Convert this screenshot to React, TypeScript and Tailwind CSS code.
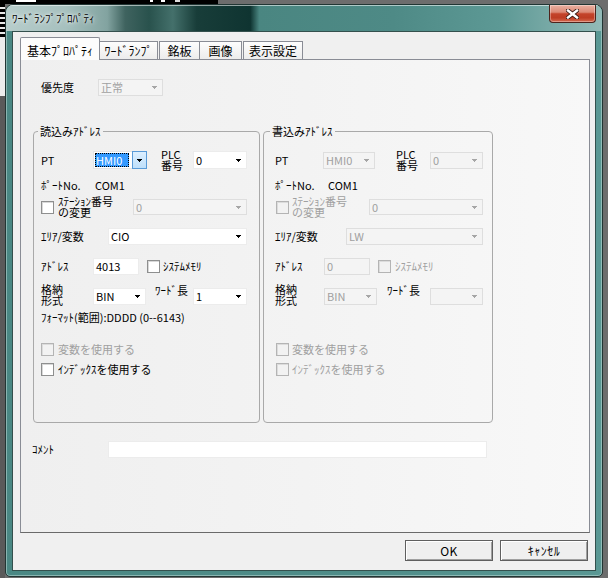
import React from "react";

function Arrow({ disabled }: { disabled?: boolean }) {
  const c = disabled ? "#a6a6a6" : "#000";
  return (
    <svg width="5" height="3" viewBox="0 0 5 3" shapeRendering="crispEdges" className="shrink-0">
      <rect x="0" y="0" width="5" height="1" fill={c} />
      <rect x="1" y="1" width="3" height="1" fill={c} />
      <rect x="2" y="2" width="1" height="1" fill={c} />
    </svg>
  );
}

function Combo({ cls, text = "", disabled }: { cls: string; text?: string; disabled?: boolean }) {
  return (
    <div
      className={`${cls} shrink-0 flex items-center justify-between border pl-[2px] pr-[5px] ${
        disabled ? "bg-[#f4f4f4] border-[#dedede] text-[#a0a0a0]" : "bg-white border-[#ececec] text-black"
      }`}
    >
      <span className="leading-[13px]">{text}</span>
      <Arrow disabled={disabled} />
    </div>
  );
}

function FocusCombo() {
  return (
    <div className="w-[54px] h-[18px] shrink-0 flex bg-white border border-[#e4e4e4]">
      <div className="flex-1 p-px">
        <div className="w-[34px] h-full bg-[#3399ff] text-white border border-dotted border-black flex items-center leading-[13px]">
          HMI0
        </div>
      </div>
      <div className="w-[15px] h-[18px] -mt-px -mr-px bg-[linear-gradient(180deg,#dcefff,#bfe0fb)] border border-[#5a9bd8] flex items-center justify-center">
        <Arrow />
      </div>
    </div>
  );
}

function Check({ disabled, cls = "" }: { disabled?: boolean; cls?: string }) {
  return (
    <span
      className={`${cls} inline-block w-[13px] h-[13px] shrink-0 border ${
        disabled
          ? "border-[#b4b4b4] bg-[#f2f2f2] shadow-[inset_1px_1px_0_#dcdcdc]"
          : "border-[#8e8f8f] bg-white shadow-[inset_1px_1px_0_#d8d8d8]"
      }`}
    />
  );
}

function LeftGroup() {
  return (
    <fieldset className="w-[227px] h-[298px] shrink-0 border border-[#a9a9a9] rounded-[4px] pl-[4px] m-0">
      <legend className="px-[2px] leading-[12px]">読込みｱﾄﾞﾚｽ</legend>
      <div className="pl-[3px] flex flex-col">
        <div className="mt-[13px] h-[20px] flex items-center">
          <span className="w-[52px]">PT</span>
          <FocusCombo />
          <div className="ml-[14px] w-[32px] h-[22px] shrink-0 leading-[11px]">
            PLC
            <br />
            番号
          </div>
          <Combo cls="w-[54px] h-[18px]" text="0" />
        </div>
        <div className="mt-[8px] h-[14px] flex items-center">
          <span className="w-[54px]">ﾎﾟｰﾄNo.</span>
          <span>COM1</span>
        </div>
        <div className="mt-[5px] h-[20px] flex items-center">
          <Check />
          <div className="ml-[4px] w-[75px] h-[22px] shrink-0 leading-[11px] whitespace-nowrap">
            ｽﾃｰｼｮﾝ番号
            <br />
            の変更
          </div>
          <Combo cls="w-[114px] h-[16px]" text="0" disabled />
        </div>
        <div className="mt-[11px] h-[17px] flex items-center">
          <span className="w-[67px]">ｴﾘｱ/変数</span>
          <Combo cls="w-[139px] h-[17px]" text="CIO" />
        </div>
        <div className="mt-[13px] h-[17px] flex items-center">
          <span className="w-[52px]">ｱﾄﾞﾚｽ</span>
          <div className="w-[46px] h-[17px] bg-white border border-[#ececec] pl-[2px] flex items-center">4013</div>
          <Check cls="ml-[8px]" />
          <span className="ml-[3px]">ｼｽﾃﾑﾒﾓﾘ</span>
        </div>
        <div className="mt-[10px] h-[20px] flex items-end">
          <div className="w-[52px] h-[22px] shrink-0 self-center leading-[11px]">
            格納
            <br />
            形式
          </div>
          <Combo cls="w-[53px] h-[17px]" text="BIN" />
          <div className="ml-[9px] w-[38px] self-start leading-[10px] whitespace-nowrap">ﾜｰﾄﾞ長</div>
          <Combo cls="w-[54px] h-[17px]" text="1" />
        </div>
        <div className="mt-[6px] h-[13px] leading-[13px] whitespace-nowrap">ﾌｫｰﾏｯﾄ(範囲):DDDD (0--6143)</div>
        <div className="mt-[19px] h-[13px] flex items-center">
          <Check disabled />
          <span className="ml-[4px] text-[#a0a0a0]">変数を使用する</span>
        </div>
        <div className="mt-[7px] h-[13px] flex items-center">
          <Check />
          <span className="ml-[4px]">ｲﾝﾃﾞｯｸｽを使用する</span>
        </div>
      </div>
    </fieldset>
  );
}

function RightGroup() {
  return (
    <fieldset className="w-[230px] h-[298px] shrink-0 border border-[#a9a9a9] rounded-[4px] pl-[6px] m-0">
      <legend className="px-[2px] leading-[12px]">書込みｱﾄﾞﾚｽ</legend>
      <div className="pl-[5px] flex flex-col">
        <div className="mt-[13px] h-[20px] flex items-center">
          <span className="w-[48px]">PT</span>
          <Combo cls="w-[52px] h-[17px]" text="HMI0" disabled />
          <div className="ml-[21px] w-[34px] h-[22px] shrink-0 leading-[11px]">
            PLC
            <br />
            番号
          </div>
          <Combo cls="w-[53px] h-[17px]" text="0" disabled />
        </div>
        <div className="mt-[8px] h-[14px] flex items-center">
          <span className="w-[53px]">ﾎﾟｰﾄNo.</span>
          <span>COM1</span>
        </div>
        <div className="mt-[5px] h-[20px] flex items-center">
          <Check disabled cls="ml-px" />
          <div className="ml-[3px] w-[77px] h-[22px] shrink-0 leading-[11px] text-[#a0a0a0] whitespace-nowrap">
            ｽﾃｰｼｮﾝ番号
            <br />
            の変更
          </div>
          <Combo cls="w-[114px] h-[16px]" text="0" disabled />
        </div>
        <div className="mt-[11px] h-[17px] flex items-center">
          <span className="w-[71px]">ｴﾘｱ/変数</span>
          <Combo cls="w-[137px] h-[17px]" text="LW" disabled />
        </div>
        <div className="mt-[13px] h-[17px] flex items-center">
          <span className="w-[49px]">ｱﾄﾞﾚｽ</span>
          <div className="w-[46px] h-[17px] bg-[#f4f4f4] border border-[#dedede] text-[#a0a0a0] pl-[2px] flex items-center">
            0
          </div>
          <Check disabled cls="ml-[8px]" />
          <span className="ml-[4px] text-[#a0a0a0]">ｼｽﾃﾑﾒﾓﾘ</span>
        </div>
        <div className="mt-[10px] h-[20px] flex items-end">
          <div className="w-[49px] h-[22px] shrink-0 self-center leading-[11px]">
            格納
            <br />
            形式
          </div>
          <Combo cls="w-[53px] h-[17px]" text="BIN" disabled />
          <div className="ml-[10px] w-[43px] self-start leading-[10px] whitespace-nowrap">ﾜｰﾄﾞ長</div>
          <Combo cls="w-[53px] h-[17px]" text="" disabled />
        </div>
        <div className="mt-[38px] h-[13px] flex items-center">
          <Check disabled cls="ml-px" />
          <span className="ml-[3px] text-[#a0a0a0]">変数を使用する</span>
        </div>
        <div className="mt-[7px] h-[13px] flex items-center">
          <Check disabled cls="ml-px" />
          <span className="ml-[3px] text-[#a0a0a0]">ｲﾝﾃﾞｯｸｽを使用する</span>
        </div>
      </div>
    </fieldset>
  );
}

function Tab({ label, cls }: { label: string; cls: string }) {
  return (
    <div
      className={`${cls} h-[18px] shrink-0 border-t border-r border-[#898c95] bg-[linear-gradient(180deg,#fdfdfd,#ececec)] flex items-center justify-center text-[12px] leading-[14px] whitespace-nowrap`}
    >
      {label}
    </div>
  );
}

function Button({ label }: { label: string }) {
  return (
    <div className="w-[88px] h-[21px] border border-[#5f5f5f] bg-[#efefef] shadow-[inset_1px_1px_0_#ffffff,inset_-1px_-1px_0_#a0a0a0] flex items-center justify-center text-[12px] leading-[14px] tracking-[0.5px]">
      {label}
    </div>
  );
}

function Window() {
  return (
    <div className="w-[598px] h-[573px] shrink-0 flex flex-col rounded-t-[8px] rounded-b-[5px] border border-[#223634] bg-[linear-gradient(90deg,#4a8884,#4f8d89_60%,#5a9894)] overflow-hidden shadow-[inset_0_0_0_1px_rgba(200,225,222,0.5)]">
      <div className="h-[26px] shrink-0 flex items-start justify-between bg-[linear-gradient(90deg,#b7cdcb_0%,#a6c0be_10%,#82a3a0_17%,#3f635f_20%,#29524d_24%,#44706b_28%,#183d39_32%,#0f3431_41%,#4a8681_42.5%,#4e8a86_65%,#5d9995_83%,#93bab7_100%)] shadow-[inset_0_1px_0_rgba(255,255,255,0.55)]">
        <div className="pl-[6px] pt-[7px] text-[11px] leading-[13px] whitespace-nowrap [text-shadow:0_0_6px_#ffffff,0_0_3px_#ffffff]">
          ﾜｰﾄﾞﾗﾝﾌﾟﾌﾟﾛﾊﾟﾃｨ
        </div>
        <div className="mr-[6px] w-[47px] h-[18px] rounded-b-[4px] border border-t-0 border-[#4e231c] bg-[linear-gradient(180deg,#eab0a2_0%,#dc8a76_42%,#c4442b_52%,#bd3d24_75%,#d56a50_100%)] shadow-[inset_0_0_0_1px_rgba(255,255,255,0.35)] flex items-center justify-center">
          <svg width="13" height="10" viewBox="0 0 13 10">
            <path d="M2 1.5 L11 8.5 M11 1.5 L2 8.5" stroke="#3a1a14" strokeWidth="4.2" strokeLinecap="square" />
            <path d="M2 1.5 L11 8.5 M11 1.5 L2 8.5" stroke="#ffffff" strokeWidth="2.4" strokeLinecap="square" />
          </svg>
        </div>
      </div>
      <div className="mx-[6px] h-[540px] shrink-0 border border-[#34504d] bg-[#f0f0f0] flex flex-col text-[11px] leading-[13px] text-black">
        <div className="h-[27px] pt-[5px] pl-[7px] flex items-end relative z-10 shrink-0">
          <div className="relative top-px w-[80px] h-[23px] shrink-0 bg-[#fcfcfc] border border-b-0 border-[#898c95] rounded-t-[2px] flex items-center justify-center pt-[3px] text-[12px] leading-[14px] whitespace-nowrap">
            基本ﾌﾟﾛﾊﾟﾃｨ
          </div>
          <Tab label="ﾜｰﾄﾞﾗﾝﾌﾟ" cls="w-[58px]" />
          <Tab label="銘板" cls="ml-px w-[41px] border-l" />
          <Tab label="画像" cls="w-[42px]" />
          <Tab label="表示設定" cls="ml-px w-[60px] border-l" />
        </div>
        <div className="ml-[7px] w-[570px] h-[474px] shrink-0 border border-[#898c95] border-b-[#6a6a6a] bg-[linear-gradient(90deg,#efefef,#f3f3f3_50%,#f8f8f8)] flex flex-col">
          <div className="mt-[19px] ml-[20px] h-[17px] flex items-center">
            <span className="w-[57px]">優先度</span>
            <Combo cls="w-[65px] h-[17px]" text="正常" disabled />
          </div>
          <div className="mt-[29px] ml-[12px] flex gap-[3px]">
            <LeftGroup />
            <RightGroup />
          </div>
          <div className="mt-[18px] ml-[11px] h-[17px] flex items-center">
            <span className="w-[76px]">ｺﾒﾝﾄ</span>
            <div className="w-[379px] h-[17px] bg-white border border-[#ececec]" />
          </div>
        </div>
        <div className="mt-[7px] pr-[7px] flex justify-end gap-[7px] shrink-0">
          <Button label="OK" />
          <Button label="ｷｬﾝｾﾙ" />
        </div>
      </div>
    </div>
  );
}

export default function App() {
  return (
    <div className="w-[608px] h-[578px] overflow-hidden bg-[#6d6d6d] flex flex-col font-['Noto_Sans_CJK_JP',sans-serif] text-black">
      <div className="h-[4px] shrink-0 flex">
        <div className="w-[218px] h-full bg-black flex items-start">
          <span className="ml-[16px] w-[20px] h-[2px] bg-white" />
          <span className="ml-[114px] w-[3px] h-[2px] bg-white" />
          <span className="ml-[8px] w-[4px] h-[2px] bg-white" />
          <span className="ml-[10px] w-[5px] h-[2px] bg-[#dddddd]" />
        </div>
      </div>
      <div className="flex flex-1 min-h-0">
        <div className="w-[5px] shrink-0 flex flex-col">
          <div className="h-[34px] bg-[repeating-linear-gradient(180deg,#000000_0px,#000000_3px,#e8e8e8_3px,#e8e8e8_5px)]" />
          <div className="h-[58px] bg-[#ececec]" />
          <div className="flex-1 bg-[#5a5a5a]" />
        </div>
        <Window />
      </div>
    </div>
  );
}
